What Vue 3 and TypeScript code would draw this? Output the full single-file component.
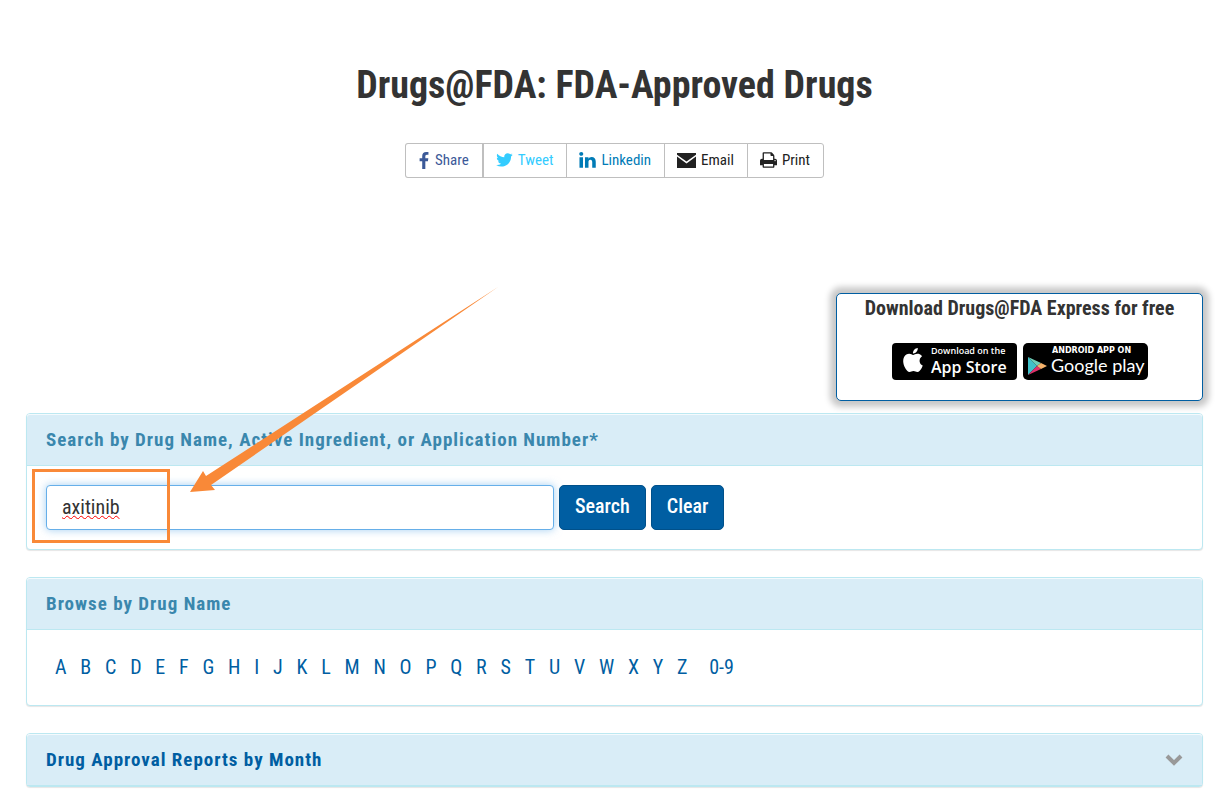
<script setup lang="ts">
import { ref } from 'vue'

interface ShareLink {
  id: string
  label: string
  viewBox: string
  path: string
}

const shareLinks: ShareLink[] = [
  {
    id: 'facebook',
    label: 'Share',
    viewBox: '90 0 870 1664',
    path: 'M959 12v264h-157q-86 0-116 36t-30 108v189h293l-39 296h-254v759h-306v-759h-255v-296h255v-218q0-186 104-288.500t277-102.500q147 0 228 12z',
  },
  {
    id: 'tweet',
    label: 'Tweet',
    viewBox: '90 160 1620 1500',
    path: 'M1684 408q-67 98-162 167 1 14 1 42 0 130-38 259.500t-115.500 248.500-184.500 210.500-258 146-323 54.500q-271 0-496-145 35 4 78 4 225 0 401-138-105-2-188-64.500t-114-159.500q33 5 61 5 43 0 85-11-112-23-185.500-111.500t-73.500-205.500v-4q68 38 146 41-66-44-105-115t-39-154q0-88 44-163 121 149 294.500 238.500t371.500 99.500q-8-38-8-74 0-134 94.500-228.500t228.500-94.500q140 0 236 102 109-21 205-78-37 115-142 178 93-10 186-50z',
  },
  {
    id: 'linkedin',
    label: 'Linkedin',
    viewBox: '120 140 1550 1490',
    path: 'M477 625v991h-330v-991h330zm21-306q1 73-50.500 122t-135.500 49h-2q-82 0-132-49t-50-122q0-74 51.500-122.500t134.500-48.500 133 48.500 51 122.500zm1166 729v568h-329v-530q0-105-40.500-164.500t-126.500-59.500q-63 0-105.500 34.500t-63.500 85.500q-11 30-11 81v553h-329q2-399 2-647t-1-296l-1-48h329v144h-2q20-32 41-56t56.500-52 87-43.500 114.500-15.500q171 0 275 113.500t104 332.500z',
  },
  {
    id: 'email',
    label: 'Email',
    viewBox: '0 0 18 14',
    path: 'M0 0H18V1.500L9 8L0 1.500ZM0 3.300L9 9.800L18 3.300V14H0Z',
  },
  {
    id: 'print',
    label: 'Print',
    viewBox: '64 128 1664 1536',
    path: 'M448 1536h896v-256h-896v256zm0-640h896v-384h-160q-40 0-68-28t-28-68v-160h-640v640zm1152 64q0-26-19-45t-45-19-45 19-19 45 19 45 45 19 45-19 19-45zm128 0v416q0 13-9.500 22.500t-22.500 9.500h-224v160q0 40-28 68t-68 28h-960q-40 0-68-28t-28-68v-160h-224q-13 0-22.500-9.500t-9.500-22.500v-416q0-79 56.500-135.500t135.500-56.500h64v-544q0-40 28-68t68-28h672q40 0 88 20t76 48l152 152q28 28 48 76t20 88v256h64q79 0 135.500 56.500t56.500 135.500z',
  },
]

const letters: string[] = 'ABCDEFGHIJKLMNOPQRSTUVWXYZ'.split('')
const query = ref('axitinib')
</script>

<template>
  <main class="page">
    <h1 class="title">Drugs@FDA: FDA-Approved Drugs</h1>

    <nav class="share" aria-label="Share this page">
      <a v-for="s in shareLinks" :key="s.id" href="#" class="share-link" :class="s.id">
        <svg class="share-icon" :viewBox="s.viewBox" aria-hidden="true"><path :d="s.path" /></svg>
        <span>{{ s.label }}</span>
      </a>
    </nav>

    <aside class="promo">
      <h2 class="promo-title">Download Drugs@FDA Express for free</h2>
      <div class="badges">
        <a href="#" class="badge">
          <svg viewBox="0 0 125 37" width="125" height="37">
            <rect width="125" height="37" rx="4" fill="#000" />
            <g transform="translate(9 5)" fill="#fff">
              <path d="M12.152 6.896c-.948 0-2.415-1.078-3.960-1.040-2.040.027-3.910 1.183-4.961 3.014-2.117 3.675-.546 9.103 1.519 12.090 1.013 1.454 2.208 3.090 3.792 3.039 1.520-.065 2.090-.987 3.935-.987 1.831 0 2.350.987 3.960.948 1.637-.026 2.676-1.480 3.676-2.948 1.156-1.688 1.636-3.325 1.662-3.415-.039-.013-3.182-1.221-3.220-4.857-.026-3.040 2.480-4.494 2.597-4.559-1.429-2.090-3.623-2.324-4.390-2.376-2-.156-3.675 1.090-4.610 1.090zM15.530 3.830c.843-1.012 1.400-2.427 1.245-3.830-1.207.052-2.662.805-3.532 1.818-.780.896-1.454 2.338-1.273 3.714 1.338.104 2.715-.688 3.559-1.701" />
            </g>
            <text x="39" y="11" class="store-small">Download on the</text>
            <text x="39" y="30" class="store-big">App Store</text>
          </svg>
        </a>
        <a href="#" class="badge">
          <svg viewBox="0 0 125 37" width="125" height="37">
            <rect width="125" height="37" rx="5" fill="#000" />
            <path d="M5 14L14 23L5 32Z" fill="#3fc1c9" />
            <path d="M5 14L18 20L14 23Z" fill="#6fd0b8" />
            <path d="M5 32L18 26L14 23Z" fill="#e0306a" />
            <path d="M14 23L18 20L24 23L18 26Z" fill="#f6b26b" />
            <text x="29" y="10" class="play-small">ANDROID APP ON</text>
            <text x="28" y="29" class="play-big">Google play</text>
          </svg>
        </a>
      </div>
    </aside>

    <section class="panel search-panel">
      <h2 class="panel-heading"><label for="drug-query">Search by Drug Name, Active Ingredient, or Application Number*</label></h2>
      <form class="panel-body search-form" @submit.prevent>
        <input id="drug-query" v-model="query" class="query" type="text" spellcheck="false" autocomplete="off" />
        <button class="btn" type="submit">Search</button>
        <button class="btn" type="button" @click="query = ''">Clear</button>
      </form>
      <div class="callout-box"></div>
      <svg class="callout-arrow" viewBox="0 0 308 206" aria-hidden="true">
        <path d="M308 0L16 189L13 184L0 205L25 203L21 198Z" />
      </svg>
    </section>

    <section class="panel">
      <h2 class="panel-heading">Browse by Drug Name</h2>
      <nav class="panel-body letters" aria-label="Browse by first letter">
        <a v-for="l in letters" :key="l" href="#" class="letter">{{ l }}</a>
        <a href="#" class="letter digits">0-9</a>
      </nav>
    </section>

    <section class="panel">
      <h2 class="panel-heading">
        <a href="#" class="toggle">
          <span>Drug Approval Reports by Month</span>
          <svg class="chevron" viewBox="0 0 18 12" aria-hidden="true"><path d="M2 2L9 9L16 2" /></svg>
        </a>
      </h2>
    </section>
  </main>
</template>

<style>
body {
  margin: 0;
  background: #fff;
}
</style>

<style scoped>
.page {
  padding: 60px 12px 16px 26px;
  font-family: 'Roboto Condensed', Roboto, 'Liberation Sans', sans-serif;
  font-size: 20px;
  color: #333;
}
.page * {
  box-sizing: border-box;
}
.title {
  margin: 0;
  font-size: 38px;
  line-height: 50px;
  font-weight: 700;
  text-align: center;
}
.share {
  display: flex;
  justify-content: center;
  margin-top: 33px;
}
.share-link {
  display: flex;
  align-items: center;
  gap: 5px;
  height: 35px;
  padding: 0 13px 1px 12px;
  border: 1px solid #bfbfbf;
  margin-left: -1px;
  font-size: 15px;
  text-decoration: none;
  color: #212121;
  background: #fff;
}
.share-link:first-child {
  border-radius: 3px 0 0 3px;
  margin-left: 0;
  border-right-width: 2px;
}
.share-link:last-child {
  border-radius: 0 3px 3px 0;
}
.share-icon {
  flex: none;
  width: 17px;
  height: 16px;
  fill: currentColor;
}
.facebook {
  color: #3b5998;
}
.facebook .share-icon {
  width: 12px;
  height: 17px;
}
.tweet {
  color: #33ccff;
}
.linkedin {
  color: #007bb6;
}
.email .share-icon {
  width: 19px;
  height: 15px;
}
.promo {
  width: 367px;
  height: 108px;
  margin: 115px 0 0 auto;
  border: 1px solid #005ea2;
  border-radius: 5px;
  background: #fff;
  box-shadow: 0 0 6px 6px #c8c8c8;
  text-align: center;
}
.promo-title {
  margin: 1px 0 0;
  font-size: 20px;
  line-height: 26px;
  font-weight: 700;
}
.badges {
  display: flex;
  justify-content: center;
  gap: 6px;
  margin-top: 22px;
}
.badge,
.badge svg {
  display: block;
}
.badge text {
  fill: #fff;
}
.store-small {
  font: 600 9px 'Open Sans', sans-serif;
}
.store-big {
  font: 600 16px 'Open Sans', sans-serif;
}
.play-small {
  font: 700 8px 'DejaVu Sans', sans-serif;
}
.play-big {
  font: 400 18px Lato, sans-serif;
}
.panel {
  position: relative;
  margin-bottom: 27px;
  border: 1px solid #bce8f1;
  border-radius: 4px;
  background: #fff;
  box-shadow: 0 1px 1px rgba(0, 0, 0, 0.1);
}
.search-panel {
  margin-top: 12px;
}
.panel-heading {
  margin: 0;
  padding: 0 19px;
  border-bottom: 1px solid #bce8f1;
  border-radius: 3px 3px 0 0;
  background: #d9edf7;
  box-shadow: inset 0 1px 0 #f4fafd;
  color: #3a87ad;
  font-size: 19px;
  line-height: 51px;
  font-weight: 700;
  letter-spacing: 1px;
}
.panel-body {
  padding: 19px;
}
.search-form {
  display: flex;
  gap: 5px;
}
.query {
  width: 508px;
  height: 45px;
  padding: 0 15px 1px;
  border: 1px solid #66afe9;
  border-radius: 4px;
  outline: none;
  font: 400 20px 'Roboto Condensed', Roboto, sans-serif;
  color: #333;
  box-shadow: 0 0 8px rgba(102, 175, 233, 0.6);
  text-decoration: underline wavy #f00 1px;
  text-underline-offset: 1px;
}
.btn {
  height: 45px;
  padding: 0 15px 3px;
  border: 1px solid #00508a;
  border-radius: 5px;
  background: #005ea2;
  color: #fff;
  font: 500 20px 'Roboto Condensed', Roboto, sans-serif;
}
.callout-box {
  position: absolute;
  left: 5px;
  top: 55px;
  width: 138px;
  height: 74px;
  border: 3px solid #f98938;
  pointer-events: none;
}
.callout-arrow {
  position: absolute;
  left: 163px;
  top: -127px;
  width: 308px;
  height: 206px;
  fill: #f98938;
  pointer-events: none;
}
.letters {
  display: flex;
  justify-content: space-between;
  max-width: 735px;
  padding: 23px 28px 24px;
}
.letter {
  color: #005ea2;
  line-height: 28px;
  text-decoration: none;
}
.digits {
  margin-left: 8px;
}
.toggle {
  display: flex;
  align-items: center;
  justify-content: space-between;
  color: #005ea2;
  text-decoration: none;
}
.chevron {
  width: 18px;
  height: 12px;
  fill: none;
  stroke: #999;
  stroke-width: 4;
}
</style>
